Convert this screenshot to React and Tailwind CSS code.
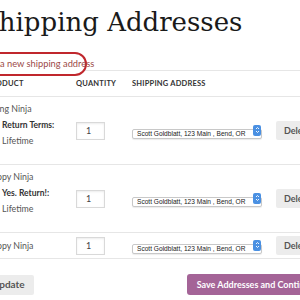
import React from 'react';

const rows = [
  { id: 1, name: 'Flying Ninja', term: 'Return Terms:', value: 'Lifetime' },
  { id: 2, name: 'Happy Ninja', term: 'Yes. Return!:', value: 'Lifetime' },
  { id: 3, name: 'Happy Ninja' },
];

const address = 'Scott Goldblatt, 123 Main , Bend, OR';

function AddressSelect() {
  return (
    <div className="relative w-[130px] h-[10px]">
      <select
        defaultValue={address}
        className="appearance-none w-full h-full bg-white border border-[#c8c8c8] rounded-[2px] pl-[4px] pr-[10px] text-[6.6px] leading-[8px] text-[#222] font-['Liberation_Sans',sans-serif] shadow-[0_1px_1px_rgba(0,0,0,0.08)]"
      >
        <option>{address}</option>
      </select>
      <div className="absolute right-[1px] top-[-1px] w-[8px] h-[11px] rounded-[2px] bg-[#4a90e2] flex items-center justify-center">
        <svg width="5" height="8" viewBox="0 0 5 8">
          <path d="M1 3 L2.5 1.5 L4 3" stroke="white" strokeWidth="0.9" fill="none" />
          <path d="M1 5 L2.5 6.5 L4 5" stroke="white" strokeWidth="0.9" fill="none" />
        </svg>
      </div>
    </div>
  );
}

function Row({ row }) {
  const tall = !!row.term;
  return (
    <div className={`flex border-b border-[#e6e6e6] ${tall ? 'h-[68px]' : 'h-[26px]'}`}>
      <div className={`w-[90px] flex flex-col ${tall ? 'pt-[4px]' : 'justify-center'}`}>
        <div className="h-[16px] leading-[16px] text-[#555]">{row.name}</div>
        {tall && (
          <div className="pl-[16px]">
            <div className="h-[16px] leading-[16px] font-bold text-[#333] text-[8.5px]">{row.term}</div>
            <div className="h-[16px] leading-[16px] text-[#555]">{row.value}</div>
          </div>
        )}
      </div>
      <div className="w-[56px] flex items-center">
        <input
          defaultValue="1"
          className="w-[29px] h-[18px] border border-[#d9d9d9] bg-white pl-[9px] text-[9px] text-[#444] shadow-[inset_0_1px_2px_rgba(0,0,0,0.08)] outline-none"
        />
      </div>
      <div className="w-[144px] flex items-center">
        <AddressSelect />
      </div>
      <div className="flex items-center">
        <button className="h-[19px] px-[8px] bg-[#ececec] rounded-[2px] text-[9px] font-bold text-[#555] whitespace-nowrap">
          Delete
        </button>
      </div>
    </div>
  );
}

export default function App() {
  return (
    <div className="w-[300px] h-[300px] overflow-hidden bg-white font-['Lato','Open_Sans',sans-serif] text-[8.8px]">
      <h1 className="ml-[-19px] pt-[2px] h-[44px] text-[26px] leading-[40px] text-[#1a1a1a] whitespace-nowrap font-['DejaVu_Serif',serif]">
        Shipping Addresses
      </h1>

      <div className="relative h-[27px] border-b border-[#e6e6e6]">
        <div className="absolute left-[-30px] top-[8px] w-[117px] h-[24px] rounded-full border-2 border-[#c0272d] bg-white" />
        <a className="absolute left-[-19px] top-[14px] text-[9.3px] leading-[12px] text-[#9c4a47] whitespace-nowrap">
          Add a new shipping address
        </a>
      </div>

      <div className="ml-[-14px] w-[340px]">
        <div className="flex h-[26px] items-center border-b border-[#e6e6e6] text-[7.5px] font-bold text-[#333] tracking-[0.2px]">
          <div className="w-[90px]">PRODUCT</div>
          <div className="w-[56px]">QUANTITY</div>
          <div className="w-[144px]">SHIPPING ADDRESS</div>
        </div>
        {rows.map((r) => (
          <Row key={r.id} row={r} />
        ))}

        <div className="flex gap-[153px] items-center pt-[15px]">
          <button className="h-[20px] ml-[-3px] px-[9px] bg-[#ececec] rounded-[2px] text-[10px] font-bold text-[#555]">
            Update
          </button>
          <button className="h-[21px] px-[10px] bg-[#a46497] rounded-[3px] text-[9px] font-bold text-white whitespace-nowrap">
            Save Addresses and Continue
          </button>
        </div>
      </div>
    </div>
  );
}
